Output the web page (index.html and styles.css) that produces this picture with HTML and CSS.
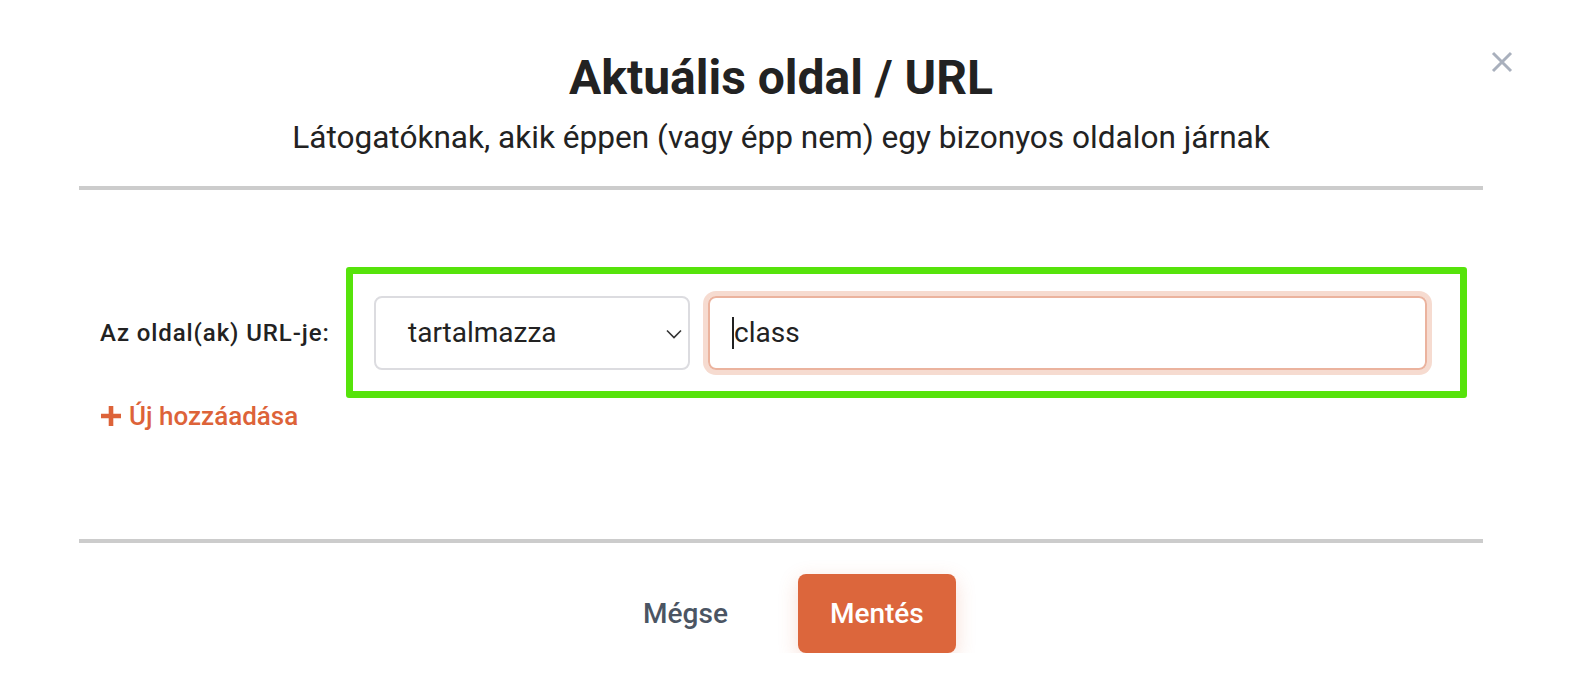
FILE: index.html
```html
<!DOCTYPE html>
<html lang="hu">
<head>
<meta charset="utf-8">
<title>Aktuális oldal / URL</title>
<link rel="stylesheet" href="styles.css">
</head>
<body>
<div class="modal">
  <button class="close" aria-label="Bezárás">
    <svg width="22" height="22" viewBox="0 0 22 22"><path d="M2 2 L20 20 M20 2 L2 20" stroke="#a9b0bd" stroke-width="3" stroke-linecap="butt" fill="none"/></svg>
  </button>
  <header class="head">
    <h1 class="title">Aktuális oldal / URL</h1>
    <p class="subtitle">Látogatóknak, akik éppen (vagy épp nem) egy bizonyos oldalon járnak</p>
  </header>
  <section class="body">
    <div class="row">
      <label class="label">Az oldal(ak) URL-je:</label>
      <div class="group">
        <div class="select">
          <span>tartalmazza</span>
          <svg class="chev" width="16" height="10" viewBox="0 0 16 10"><path d="M1 1.5 L8 8.5 L15 1.5" stroke="#333" stroke-width="1.6" fill="none"/></svg>
        </div>
        <div class="input"><span class="caret"></span>class</div>
      </div>
    </div>
    <a class="add" href="#">
      <svg width="22" height="22" viewBox="0 0 22 22"><path d="M11 1 V21 M1 11 H21" stroke="#dd6339" stroke-width="4.6" fill="none"/></svg>
      <span>Új hozzáadása</span>
    </a>
  </section>
  <footer class="foot">
    <button class="cancel">Mégse</button>
    <button class="save">Mentés</button>
  </footer>
</div>
</body>
</html>
```

FILE: styles.css
```css
* { box-sizing: border-box; }
html, body { margin: 0; padding: 0; background: #fff; }
body { font-family: Roboto, "Noto Sans", Arial, sans-serif; color: #222; }
.modal { position: relative; width: 1404px; margin-left: 79px; }
.close { position: absolute; top: 51px; left: 1412px; background: none; border: 0; padding: 0; width: 22px; height: 22px; cursor: pointer; }
.close svg { display: block; }
.head { text-align: center; padding-top: 50px; border-bottom: 4px solid #cccccc; padding-bottom: 30px; }
.title { margin: 0; font-size: 48px; line-height: 56px; font-weight: 700; color: #222; }
.subtitle { margin: 14px 0 0; font-size: 31.6px; line-height: 36px; font-weight: 400; color: #222; }
.body { padding: 77px 0 0 21px; height: 353px; border-bottom: 4px solid #cccccc; }
.row { display: flex; align-items: center; }
.label { font-size: 24px; font-weight: 500; letter-spacing: 0.9px; color: #222; width: 246px; white-space: nowrap; }
.group { display: flex; align-items: center; gap: 13px; width: 1121px; height: 131px; border: 7px solid #56e30b; border-radius: 3px; padding: 0 28px 0 21px; }
.select { position: relative; width: 316px; height: 74px; border: 2px solid #dcdce0; border-radius: 8px; display: flex; align-items: center; padding-left: 32px; font-size: 28px; color: #222; }
.chev { position: absolute; right: 6px; top: 31px; }
.input { flex: 1; height: 74px; border: 2px solid #ebb39e; border-radius: 8px; box-shadow: 0 0 0 5px #f6dbd0; display: flex; align-items: center; padding-left: 22px; font-size: 28px; color: #222; margin-left: 5px; margin-right: 5px; }
.caret { display: inline-block; width: 2px; height: 32px; background: #222; }
.add { display: inline-flex; align-items: center; gap: 7px; margin-top: 3px; line-height: 30px; text-decoration: none; color: #dd6339; font-size: 26px; font-weight: 500; }
.add svg { display: block; }
.foot { display: flex; justify-content: center; align-items: center; gap: 70px; padding-top: 31px; padding-left: 37px; }
.cancel { background: none; border: 0; font-family: inherit; font-size: 28px; font-weight: 500; color: #4b5563; padding: 0; }
.save { width: 158px; height: 79px; border: 0; border-radius: 8px; background: #dc663c; color: #fff; font-family: inherit; font-size: 28px; font-weight: 500; box-shadow: 0 6px 20px rgba(220, 102, 60, 0.22); }
```
